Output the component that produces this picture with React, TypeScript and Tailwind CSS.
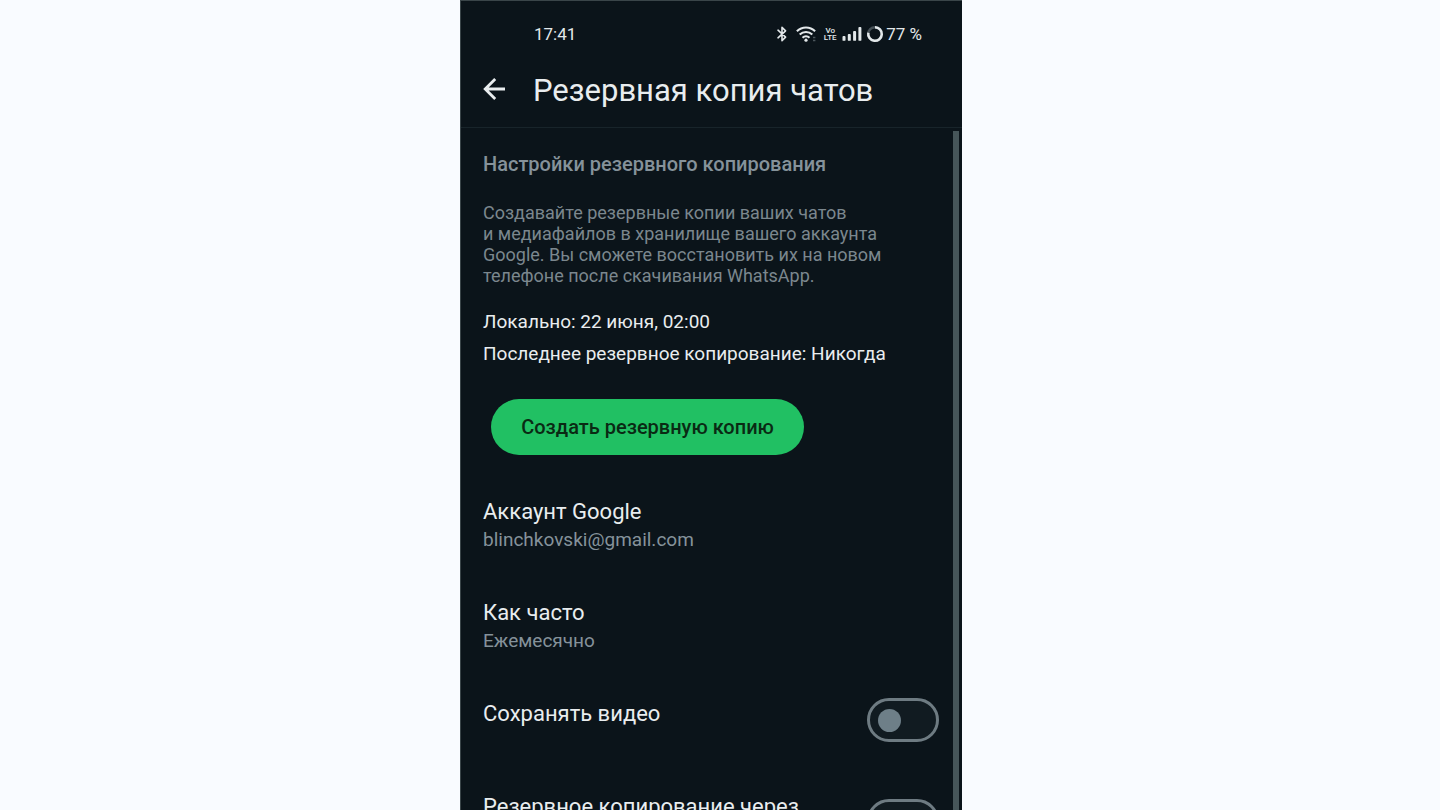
import React, { useState } from 'react';

interface SettingLinkProps {
  title: string;
  value: string;
}

interface SettingToggleProps {
  id: string;
  title: string;
  checked: boolean;
  onChange: (next: boolean) => void;
}

const StatusIcons: React.FC = () => (
  <div className="flex items-center text-[#e3e8ea]">
    {/* Bluetooth */}
    <svg width="12" height="18" viewBox="0 0 12 18" fill="none" stroke="currentColor" strokeWidth="1.6" aria-hidden="true">
      <path d="M2 5.2 9.6 12.2 6 15.6V2.4L9.6 5.8 2 12.8" strokeLinejoin="round" strokeLinecap="round" />
    </svg>
    {/* Wi-Fi */}
    <svg className="ml-2" width="20" height="18" viewBox="0 0 20 18" fill="none" stroke="currentColor" strokeWidth="2.1" aria-hidden="true">
      <path d="M0.9 6.3C6 1.2 14 1.2 19.1 6.3" />
      <path d="M3.7 9.6C7.3 6.1 12.7 6.1 16.3 9.6" />
      <path d="M6.5 12.7C8.5 10.8 11.5 10.8 13.5 12.7" />
      <circle cx="10" cy="15.2" r="1.6" fill="currentColor" stroke="none" />
      <path d="M17 12.5h2.4M17 15.5h2.4" stroke="#4b565c" strokeWidth="1.4" />
    </svg>
    <span className="ml-2 flex w-3 flex-col items-center text-[8px] font-medium leading-[7px]">
      <span>Vo</span>
      <span>LTE</span>
    </span>
    {/* Mobile signal */}
    <svg className="ml-1.5" width="20" height="18" viewBox="0 0 20 18" fill="currentColor" aria-hidden="true">
      <rect x="0.5" y="11" width="3" height="4.8" rx="0.9" />
      <rect x="5.8" y="9" width="3" height="6.8" rx="0.9" />
      <rect x="11.1" y="6" width="3" height="9.8" rx="0.9" />
      <rect x="16.4" y="2" width="3" height="13.8" rx="0.9" />
    </svg>
    {/* Battery ring */}
    <svg className="ml-1" width="18" height="18" viewBox="0 0 18 18" fill="none" strokeWidth="2.5" aria-hidden="true">
      <circle cx="9" cy="9" r="6.8" stroke="#465056" />
      <path d="M9 2.2A6.8 6.8 0 1 1 2.3 7.8" stroke="currentColor" />
    </svg>
    <span className="ml-0.5 text-[17px] leading-5">77 %</span>
  </div>
);

const SettingLink: React.FC<SettingLinkProps> = ({ title, value }) => (
  <button type="button" className="flex h-14 w-full shrink-0 flex-col items-start text-left">
    <span className="text-[22px] leading-7 text-[#e9edef]">{title}</span>
    <span className="text-[19px] leading-7 text-[#85929a]">{value}</span>
  </button>
);

const SettingToggle: React.FC<SettingToggleProps> = ({ id, title, checked, onChange }) => (
  <div className="flex min-h-14 shrink-0 items-center justify-between">
    <label htmlFor={id} className="min-h-10 max-w-[340px] text-[22px] leading-7 text-[#e9edef]">{title}</label>
    <input
      id={id}
      type="checkbox"
      checked={checked}
      onChange={e => onChange(e.target.checked)}
      className="flex h-11 w-[72px] shrink-0 cursor-pointer appearance-none items-center rounded-full border-[3px] border-[#6e7b82] bg-[#111b21] px-2 before:size-[23px] before:rounded-full before:bg-[#6e7f88] before:content-[''] checked:justify-end checked:bg-[#21c063]"
    />
  </div>
);

export default function App() {
  const [includeVideo, setIncludeVideo] = useState(false);
  const [useCellular, setUseCellular] = useState(false);

  return (
    <div className="flex h-screen justify-center overflow-hidden bg-[#f9fbff] pr-[18px] font-['Roboto','Noto_Sans',sans-serif]">
      <div className="flex w-full max-w-[502px] flex-col border-l border-t border-[#3a4549] bg-[#0b141a]">
        <div className="flex h-[66px] shrink-0 items-center justify-between pl-[73px] pr-10 text-[#e3e8ea]">
          <span className="text-[17px] leading-5">17:41</span>
          <StatusIcons />
        </div>

        <header className="flex h-[61px] shrink-0 items-start gap-[27px] border-b border-[#18242a] px-[22px] text-[#e9edef]">
          <button type="button" aria-label="Назад" className="pt-2.5">
            <svg width="23" height="24" viewBox="0 0 23 24" fill="none" stroke="currentColor" strokeWidth="2.8" aria-hidden="true">
              <path d="M22 12H2.5M12.2 2 2.2 12l10 10" />
            </svg>
          </button>
          <h1 className="pt-1 text-[31px] leading-10">Резервная копия чатов</h1>
        </header>

        <div className="flex min-h-0 flex-1">
          <main className="flex min-w-0 flex-1 flex-col overflow-hidden pl-[22px] pr-3.5 pt-6">
            <h2 className="text-[20px] font-medium leading-6 text-[#85929a]">Настройки резервного копирования</h2>

            <p className="mt-[26px] text-[18px] leading-[21px] text-[#7b878e]">
              Создавайте резервные копии ваших чатов<br />
              и медиафайлов в хранилище вашего аккаунта<br />
              Google. Вы сможете восстановить их на новом<br />
              телефоне после скачивания WhatsApp.
            </p>

            <div className="mt-5 text-[19px] leading-8 text-[#e9edef]">
              <p>Локально: 22 июня, 02:00</p>
              <p>Последнее резервное копирование: Никогда</p>
            </div>

            <button type="button" className="ml-2 mt-[29px] h-14 w-[313px] shrink-0 rounded-full bg-[#21c063] text-[20px] font-medium text-[#0a2a14]">
              Создать резервную копию
            </button>

            <div className="mt-[43px] flex flex-col gap-[45px]">
              <SettingLink title="Аккаунт Google" value="blinchkovski@gmail.com" />
              <SettingLink title="Как часто" value="Ежемесячно" />
            </div>

            <div className="mt-[37px] flex flex-col gap-[45px]">
              <SettingToggle id="include-video" title="Сохранять видео" checked={includeVideo} onChange={setIncludeVideo} />
              <SettingToggle id="use-cellular" title="Резервное копирование через сотовую сеть" checked={useCellular} onChange={setUseCellular} />
            </div>
          </main>
          {/* Scroll thumb */}
          <div className="mr-[3px] mt-[3px] w-1.5 shrink-0 bg-[#465559]" />
        </div>
      </div>
    </div>
  );
}
